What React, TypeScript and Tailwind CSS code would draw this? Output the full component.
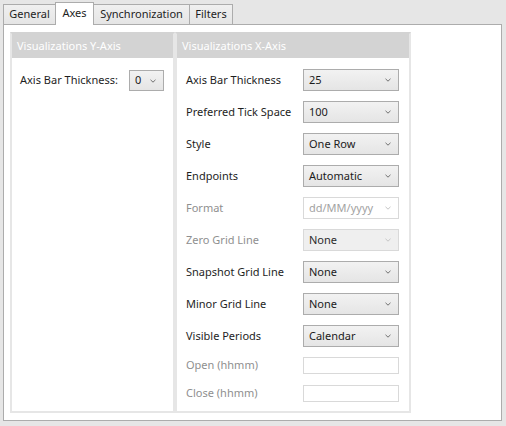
import React from "react";

type Row = {
  label: string;
  value?: string;
  kind: "select" | "disabledSelect" | "lockedSelect" | "input";
  dim?: boolean;
};

const rows: Row[] = [
  { label: "Axis Bar Thickness", value: "25", kind: "select" },
  { label: "Preferred Tick Space", value: "100", kind: "select" },
  { label: "Style", value: "One Row", kind: "select" },
  { label: "Endpoints", value: "Automatic", kind: "select" },
  { label: "Format", value: "dd/MM/yyyy", kind: "disabledSelect", dim: true },
  { label: "Zero Grid Line", value: "None", kind: "lockedSelect", dim: true },
  { label: "Snapshot Grid Line", value: "None", kind: "select" },
  { label: "Minor Grid Line", value: "None", kind: "select" },
  { label: "Visible Periods", value: "Calendar", kind: "select" },
  { label: "Open (hhmm)", kind: "input", dim: true },
  { label: "Close (hhmm)", kind: "input", dim: true },
];

function Chevron({ light }: { light?: boolean }) {
  return (
    <svg width="6" height="4" viewBox="0 0 6 4" className="shrink-0">
      <polyline
        points="0.5,0.8 3,3.2 5.5,0.8"
        fill="none"
        stroke={light ? "#c4c4c4" : "#707070"}
        strokeWidth="1"
      />
    </svg>
  );
}

function Combo({ value, kind, className }: { value?: string; kind: Row["kind"]; className: string }) {
  if (kind === "input") {
    return <div className={`${className} h-[17px] border border-[#d9d9d9] bg-white`} />;
  }
  const look =
    kind === "select"
      ? "border-[#acacac] bg-gradient-to-b from-[#f2f2f2] to-[#e5e5e5] text-[#1b1b1b]"
      : kind === "lockedSelect"
        ? "border-[#d9d9d9] bg-[#efefef] text-[#2b2b2b]"
        : "border-[#d9d9d9] bg-white text-[#a2a2a2]";
  return (
    <div className={`${className} h-[22px] flex items-center justify-between border pl-[5px] pr-[7px] ${look}`}>
      <span>{value}</span>
      <Chevron light={kind !== "select"} />
    </div>
  );
}

function GroupHeader({ title }: { title: string }) {
  return (
    <div className="h-[24px] bg-[#d3d3d3] flex items-center pl-[5px] text-white">
      {title}
    </div>
  );
}

export default function App() {
  return (
    <div
      className="w-[506px] h-[426px] bg-[#e6e6e6] px-[3px] pt-[2px] text-[11px] text-[#1e1e1e]"
      style={{ fontFamily: "'Segoe UI', 'Noto Sans', sans-serif" }}
    >
      {/* Tabs */}
      <div className="flex items-end h-[22px]">
        <div className="w-[52px] h-[20px] border-l border-t border-[#acacac] bg-gradient-to-b from-[#f0f0f0] to-[#e5e5e5] flex items-center justify-center">
          General
        </div>
        <div className="relative z-10 w-[39px] h-[23px] -mb-px border-l border-t border-r border-[#acacac] bg-white flex items-center justify-center pb-[2px]">
          Axes
        </div>
        <div className="w-[96px] h-[20px] border-t border-r border-[#acacac] bg-gradient-to-b from-[#f0f0f0] to-[#e5e5e5] flex items-center justify-center">
          Synchronization
        </div>
        <div className="w-[43px] h-[20px] border-t border-r border-[#acacac] bg-gradient-to-b from-[#f0f0f0] to-[#e5e5e5] flex items-center justify-center">
          Filters
        </div>
      </div>

      {/* Panel */}
      <div className="w-[499px] h-[397px] border border-[#acacac] bg-white pl-[6px] pt-[7px]">
        <div className="flex h-[381px]">
          {/* Y axis */}
          <div className="w-[165px] flex flex-col border-2 border-[#e6e6e6] border-t-[#d3d3d3]">
            <GroupHeader title="Visualizations Y-Axis" />
            <div className="flex items-center pl-[8px] pt-[12px]">
              <span className="w-[109px]">Axis Bar Thickness:</span>
              <Combo value="0" kind="select" className="w-[35px] !h-[21px]" />
            </div>
          </div>

          {/* X axis */}
          <div className="w-[236px] flex flex-col border-2 border-[#e6e6e6] border-t-[#d3d3d3]">
            <GroupHeader title="Visualizations X-Axis" />
            <div className="flex flex-col gap-[10px] pl-[9px] pt-[11px]">
              {rows.map((r, i) => (
                <div key={r.label} className={`flex items-center ${i === rows.length - 1 ? "mt-px" : ""}`}>
                  <span className={`w-[117px] ${r.dim ? "text-[#8f8f8f]" : ""}`}>{r.label}</span>
                  <Combo value={r.value} kind={r.kind} className="w-[96px]" />
                </div>
              ))}
            </div>
          </div>
        </div>
      </div>
    </div>
  );
}
